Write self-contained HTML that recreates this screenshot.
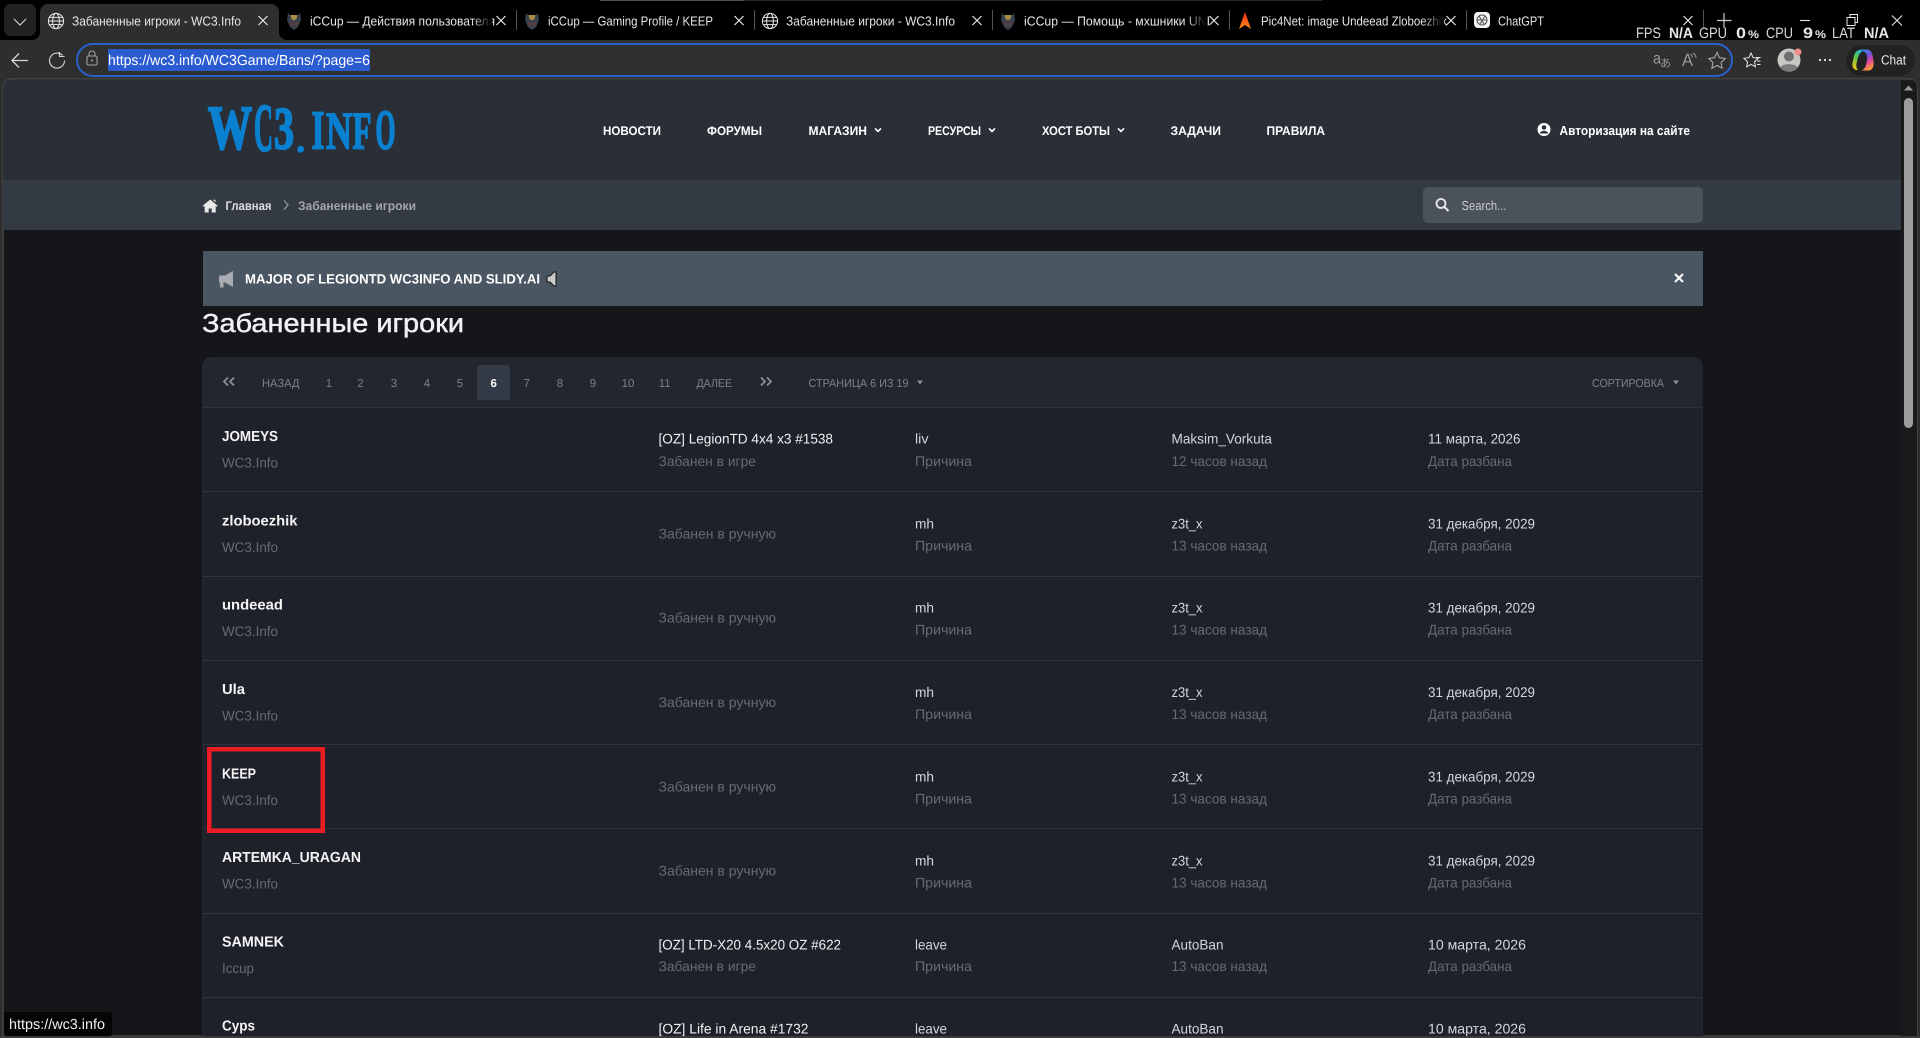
<!DOCTYPE html>
<html lang="ru"><head><meta charset="utf-8"><title>Забаненные игроки - WC3.Info</title>
<style>
html,body{margin:0;padding:0;background:#000;overflow:hidden;width:1920px;height:1038px}
svg{display:block;font-family:"Liberation Sans","Noto Sans CJK JP",sans-serif;text-rendering:geometricPrecision}
.t{font-size:13px;fill:#e6e6e6}
.o{font-size:15px;fill:#d8d8d8}
.ob{font-size:15px;fill:#e8e8e8;font-weight:700}
.nv{font-size:12.5px;font-weight:700;fill:#fff}
.bc{font-size:12.5px;font-weight:700}
.pg{font-size:11.5px;fill:#7c818a}
.n{font-size:14.5px;font-weight:700;fill:#f4f4f4}
.s{font-size:14px;fill:#666a72}
.v{font-size:14px;fill:#d3d6da}
.x{stroke:#e8e8e8;stroke-width:1.2;fill:none}
.lg{font-family:"Liberation Serif",serif;font-weight:700;fill:#0a80d0;stroke:#0a80d0;stroke-width:1.7}
</style></head><body>
<svg width="1920" height="1038" viewBox="0 0 1920 1038" xmlns="http://www.w3.org/2000/svg">
<defs>
<linearGradient id="fade"><stop offset="0" stop-color="#000" stop-opacity="0"/><stop offset="1" stop-color="#000"/></linearGradient>
<linearGradient id="cp1" x1="0" y1="0" x2="0.4" y2="1"><stop offset="0" stop-color="#2a8fe8"/><stop offset=".45" stop-color="#7a4fd8"/><stop offset=".75" stop-color="#e84a9a"/><stop offset="1" stop-color="#f5923a"/></linearGradient>
<linearGradient id="cp2" x1="0.7" y1="0" x2="0.2" y2="1"><stop offset="0" stop-color="#23b5d8"/><stop offset=".45" stop-color="#5cc84a"/><stop offset="1" stop-color="#f5c518"/></linearGradient>
<linearGradient id="fl" x1="0" y1="0" x2="0" y2="1"><stop offset="0" stop-color="#f52a1c"/><stop offset="1" stop-color="#fb8a12"/></linearGradient>
<g id="mask"><path d="M-6-8 L-3-5 L3-5 L6-8 L7-1 L4 6 L0 9 L-4 6 L-7-1Z" fill="#39414d"/><path d="M-3.500-6 L3.500-6 L2.500-2 L0-.5 L-2.500-2Z" fill="#a88f44"/><path d="M-4 1 L-1 2 L-1 5 L-3 4Z M4 1 L1 2 L1 5 L3 4Z" fill="#6e3b3b"/></g>
<g id="globe" fill="none" stroke="#e6e6e6" stroke-width="1"><circle r="7.6"/><ellipse rx="3.4" ry="7.6"/><path d="M-7.6 0H7.6M-6.8-3.6H6.8M-6.8 3.6H6.8"/></g>
<g id="cl"><path class="x" d="M-4.5-4.5 4.5 4.5M4.5-4.5-4.5 4.5"/></g>
<g id="ch"><path d="M-3-1.6 0 1.4 3-1.6" fill="none" stroke="#fff" stroke-width="1.6"/></g>
<path id="tri" d="M-3-2H3L0 2Z" fill="#8b9098"/>
<clipPath id="cc"><path d="M3 1036V87a8 8 0 0 1 8-8H1909a8 8 0 0 1 8 8V1036Z"/></clipPath>
</defs>

<!-- browser chrome -->
<rect width="1920" height="40" fill="#000"/>
<rect x="600" y="0" width="722" height="1" fill="#2a2a2a"/>
<rect x="600" y="0" width="144" height="1" fill="#555"/>
<rect y="40" width="1920" height="998" fill="#2e2e2e"/>
<rect x="4" y="4" width="32" height="32" rx="7" fill="#222"/>
<path d="M14 19l6 6 6-6" fill="none" stroke="#cfcfcf" stroke-width="1.2"/>
<path d="M32 40a8 8 0 0 0 8-8V12a8 8 0 0 1 8-8H271a8 8 0 0 1 8 8V32a8 8 0 0 0 8 8Z" fill="#2e2e2e"/>

<use href="#globe" x="56" y="21"/>
<text class="t" x="72" y="25.5" textLength="169" lengthAdjust="spacingAndGlyphs">Забаненные игроки - WC3.Info</text>
<use href="#cl" x="263" y="20.5"/>

<use href="#mask" x="294" y="21"/>
<text class="t" x="310" y="25.5" textLength="185" lengthAdjust="spacingAndGlyphs">iCCup — Действия пользователя</text>
<rect x="472" y="8" width="20" height="26" fill="url(#fade)"/>
<use href="#cl" x="501" y="20.5"/>
<rect x="516" y="10" width="1" height="20" fill="#555"/>

<use href="#mask" x="532" y="21"/>
<text class="t" x="548" y="25.5" textLength="165" lengthAdjust="spacingAndGlyphs">iCCup — Gaming Profile / KEEP</text>
<use href="#cl" x="739" y="20.5"/>
<rect x="754" y="10" width="1" height="20" fill="#555"/>

<use href="#globe" x="770" y="21"/>
<text class="t" x="786" y="25.5" textLength="169" lengthAdjust="spacingAndGlyphs">Забаненные игроки - WC3.Info</text>
<use href="#cl" x="977" y="20.5"/>
<rect x="992" y="10" width="1" height="20" fill="#555"/>

<use href="#mask" x="1008" y="21"/>
<text class="t" x="1024" y="25.5" textLength="186" lengthAdjust="spacingAndGlyphs">iCCup — Помощь - мхшники UNI</text>
<rect x="1186" y="8" width="20" height="26" fill="url(#fade)"/>
<use href="#cl" x="1214" y="20.5"/>
<rect x="1229" y="10" width="1" height="20" fill="#555"/>

<path d="M1245 12 L1251 29 L1245 25 L1239 29Z" fill="url(#fl)"/>
<text class="t" x="1261" y="25.5" textLength="186" lengthAdjust="spacingAndGlyphs">Pic4Net: image Undeead Zloboezhik</text>
<rect x="1422" y="8" width="22" height="26" fill="url(#fade)"/>
<use href="#cl" x="1451" y="20.5"/>
<rect x="1466" y="10" width="1" height="20" fill="#555"/>

<rect x="1474" y="12" width="16" height="16" rx="4" fill="#f2f2f2"/>
<g fill="none" stroke="#555" stroke-width="1.1"><circle cx="1482" cy="20" r="5"/><path d="M1479 16l5 8M1485 16l-5 8M1477 20h10"/></g>
<text class="t" x="1498" y="25.5" textLength="46" lengthAdjust="spacingAndGlyphs">ChatGPT</text>
<use href="#cl" x="1688" y="20.5"/>
<rect x="1703" y="10" width="1" height="18" fill="#555"/>
<path d="M1724 13v15M1717 20.5h14.500" stroke="#cfcfcf" stroke-width="1.2" fill="none"/>
<path d="M1800 20.500h10" stroke="#e8e8e8" stroke-width="1.1"/>
<path d="M1847 17.500h8v8h-8zM1850 17v-2.500h7.500v8h-2.500" fill="none" stroke="#e8e8e8" stroke-width="1"/>
<path d="M1892 15.500l10 10M1902 15.500l-10 10" stroke="#e8e8e8" stroke-width="1.1"/>

<!-- overlay stats -->
<text class="o" x="1636" y="38" textLength="25" lengthAdjust="spacingAndGlyphs">FPS</text>
<text class="ob" x="1669" y="38" textLength="24" lengthAdjust="spacingAndGlyphs">N/A</text>
<text class="o" x="1699" y="38" textLength="28" lengthAdjust="spacingAndGlyphs">GPU</text>
<text class="ob" x="1736" y="38" textLength="10" lengthAdjust="spacingAndGlyphs">0</text>
<text class="ob" x="1748" y="38" style="font-size:11px" textLength="11" lengthAdjust="spacingAndGlyphs">%</text>
<text class="o" x="1766" y="38" textLength="27" lengthAdjust="spacingAndGlyphs">CPU</text>
<text class="ob" x="1803" y="38" textLength="10" lengthAdjust="spacingAndGlyphs">9</text>
<text class="ob" x="1815" y="38" style="font-size:11px" textLength="11" lengthAdjust="spacingAndGlyphs">%</text>
<text class="o" x="1832" y="38" textLength="23" lengthAdjust="spacingAndGlyphs">LAT</text>
<text class="ob" x="1864" y="38" textLength="25" lengthAdjust="spacingAndGlyphs">N/A</text>

<!-- toolbar -->
<path d="M28 60.500H12M19 53.500l-7 7 7 7" fill="none" stroke="#d8d8d8" stroke-width="1.3"/>
<path d="M62.500 55.500a7.500 7.500 0 1 0 2 5" fill="none" stroke="#d8d8d8" stroke-width="1.1"/><path d="M59.500 52v4.500h5" fill="none" stroke="#d8d8d8" stroke-width="1.1"/>
<rect x="77" y="44" width="1655" height="32" rx="16" fill="#303030" stroke="#2b5fcc" stroke-width="2"/>
<rect x="87" y="56" width="10" height="9" rx="1.500" fill="none" stroke="#a5a5a5"/><path d="M89 56v-2a3 3 0 0 1 6 0v2" fill="none" stroke="#a5a5a5"/><circle cx="92" cy="60.500" r="1" fill="#a5a5a5"/>
<rect x="108" y="49" width="262" height="22" fill="#2a5bd0"/>
<text x="108" y="65" style="font-size:14.500px;fill:#fff" textLength="262" lengthAdjust="spacingAndGlyphs">https://wc3.info/WC3Game/Bans/?page=6</text>
<text x="1653" y="63.500" style="font-size:16px;fill:#9a9a9a" textLength="8" lengthAdjust="spacingAndGlyphs">a</text><text x="1660" y="67" style="font-size:11px;fill:#9a9a9a;font-family:'Noto Sans CJK JP',sans-serif">あ</text>
<text x="1682" y="66" style="font-size:18px;fill:#9a9a9a" textLength="11" lengthAdjust="spacingAndGlyphs">A</text><path d="M1693 53c2 1 3 3 3 5M1690.500 54c1 1 2 2 2 3.500" fill="none" stroke="#9a9a9a"/>
<path d="M1717 52.500l2.500 5.200 5.700.8-4.100 4 1 5.700-5.100-2.700-5.100 2.700 1-5.700-4.100-4 5.700-.8Z" fill="none" stroke="#a8a8a8" stroke-width="1.100"/>
<path d="M1751 53l2.100 4.600 5 .7-3.600 3.500.9 5-4.400-2.400-4.400 2.400.9-5-3.600-3.500 5-.7Z" fill="none" stroke="#e8e8e8" stroke-width="1"/>
<path d="M1756 57.500h4.500M1757 61h3.500M1757 64.500h3.500" stroke="#e8e8e8" stroke-width="1"/>
<circle cx="1789" cy="60" r="11.500" fill="#c9c7c4"/><circle cx="1789" cy="56.500" r="5" fill="#6f6f6f"/><path d="M1780 67.500a10 6 0 0 1 18 0a11.500 11.500 0 0 1-18 0Z" fill="#7d7d7d"/>
<circle cx="1798" cy="52" r="3.500" fill="#f28b8b"/>
<circle cx="1820" cy="60" r="1.100" fill="#e8e8e8"/><circle cx="1825" cy="60" r="1.100" fill="#e8e8e8"/><circle cx="1830" cy="60" r="1.100" fill="#e8e8e8"/>
<rect x="1846" y="45" width="69" height="31" rx="15.500" fill="#222"/>
<path d="M1860 50c-3 0-5 2-6 6l-1.500 7c-.8 4 1.500 7 4.500 7h1c-1.500-1.500-2-4-1.500-6.500l1.500-6c1-3 3-6.500 7-7.500Z" fill="url(#cp2)"/>
<path d="M1860 49.500h7c3 0 4.500 2 5.500 5.500l1 6c.7 4-.5 9.500-5 9.500h-8c3 0 5-3 5.500-6l1-4.500c.5-3 0-6-2-7.500-1.500-1-3.500-2-5-3Z" fill="url(#cp1)"/>
<text x="1881" y="64.500" style="font-size:13.500px;fill:#e6e6e6" textLength="25" lengthAdjust="spacingAndGlyphs">Chat</text>

<!-- page -->
<path d="M3 1036V87a8 8 0 0 1 8-8H1909a8 8 0 0 1 8 8V1036Z" fill="#14161a" stroke="#555" stroke-width="1"/>
<g clip-path="url(#cc)">
<rect x="3" y="80" width="1898" height="100" fill="#2a2e37"/>
<rect x="3" y="180" width="1898" height="50" fill="#343a44"/>
<rect x="1901" y="80" width="16" height="960" fill="#1a1a1a"/>
<path d="M1908.500 85.500l4.500 5h-9Z" fill="#9a9a9a"/>
<rect x="1904" y="98" width="9" height="330" rx="4.500" fill="#9d9d9d"/>

<!-- logo -->
<text class="lg" x="208" y="148.500" style="font-size:62px;stroke-width:2.400" textLength="44" lengthAdjust="spacingAndGlyphs">W</text>
<text class="lg" x="254" y="150.500" style="font-size:68px;stroke-width:2" textLength="19" lengthAdjust="spacingAndGlyphs">C</text>
<text class="lg" x="274" y="148.500" style="font-size:60px;stroke-width:2" textLength="20" lengthAdjust="spacingAndGlyphs">3</text>
<circle cx="300.700" cy="149.300" r="3.400" fill="#0a80d0"/>
<text class="lg" x="311.500" y="148.500" style="font-size:55px" textLength="13" lengthAdjust="spacingAndGlyphs">I</text>
<text class="lg" x="326" y="148.500" style="font-size:53px" textLength="26" lengthAdjust="spacingAndGlyphs">N</text>
<text class="lg" x="352.500" y="148.500" style="font-size:53px" textLength="19" lengthAdjust="spacingAndGlyphs">F</text>
<text class="lg" x="375.500" y="148.500" style="font-size:56px;stroke-width:2" textLength="20" lengthAdjust="spacingAndGlyphs">O</text>

<!-- nav -->
<text class="nv" x="603" y="135" textLength="58" lengthAdjust="spacingAndGlyphs">НОВОСТИ</text>
<text class="nv" x="707" y="135" textLength="55" lengthAdjust="spacingAndGlyphs">ФОРУМЫ</text>
<text class="nv" x="808.500" y="135" textLength="58.500" lengthAdjust="spacingAndGlyphs">МАГАЗИН</text><use href="#ch" x="878" y="130"/>
<text class="nv" x="928" y="135" textLength="53" lengthAdjust="spacingAndGlyphs">РЕСУРСЫ</text><use href="#ch" x="992" y="130"/>
<text class="nv" x="1042" y="135" textLength="68" lengthAdjust="spacingAndGlyphs">ХОСТ БОТЫ</text><use href="#ch" x="1121" y="130"/>
<text class="nv" x="1170.500" y="135" textLength="50.500" lengthAdjust="spacingAndGlyphs">ЗАДАЧИ</text>
<text class="nv" x="1266.500" y="135" textLength="58.500" lengthAdjust="spacingAndGlyphs">ПРАВИЛА</text>
<circle cx="1544" cy="129.500" r="6.500" fill="#fff"/><circle cx="1544" cy="127.500" r="2.300" fill="#2a2e37"/><path d="M1540 133.500a4 2.800 0 0 1 8 0Z" fill="#2a2e37"/>
<text class="nv" x="1559.500" y="135" style="font-size:13px" textLength="130.500" lengthAdjust="spacingAndGlyphs">Авторизация на сайте</text>

<!-- breadcrumb -->
<path d="M210.200 199.500l7.500 6.300-1 1.100-1-.8v6.400h-4v-4h-3v4h-4v-6.400l-1 .8-1-1.100Zm3.300.3h2v2.500l-2-1.700Z" fill="#e8e8e8"/>
<text class="bc" x="225.500" y="210" style="fill:#d9dbde" textLength="46" lengthAdjust="spacingAndGlyphs">Главная</text>
<path d="M284 200.500l4 4.500-4 4.500" fill="none" stroke="#9a9fa6" stroke-width="1.200"/>
<text class="bc" x="298" y="210" style="fill:#a0a4aa" textLength="118" lengthAdjust="spacingAndGlyphs">Забаненные игроки</text>
<rect x="1423" y="187" width="280" height="36" rx="5" fill="#4b525c"/>
<circle cx="1441" cy="203.500" r="4.500" fill="none" stroke="#e8e8e8" stroke-width="1.800"/><path d="M1444.500 207l4 4" stroke="#e8e8e8" stroke-width="2"/>
<text x="1461.500" y="210" style="font-size:13px;fill:#c6c9cd" textLength="45" lengthAdjust="spacingAndGlyphs">Search...</text>

<!-- banner -->
<rect x="203" y="251" width="1500" height="55" fill="#4b5663"/>
<path d="M219 275.500h6l8-4.500v16l-8-4.500h-1.500v5h-3.500v-5h-1Z" fill="#a8acb2"/>
<text x="245" y="283.500" style="font-size:13.500px;font-weight:700;fill:#fff" textLength="295" lengthAdjust="spacingAndGlyphs">MAJOR OF LEGIONTD WC3INFO AND SLIDY.AI</text>
<path d="M547 276h3l4-4h2v14h-2l-4-4h-3Z" fill="#c9c9c9" stroke="#111" stroke-width="1"/>
<path d="M1675 274l8 8M1683 274l-8 8" stroke="#fff" stroke-width="2"/>

<text x="202" y="332" style="font-size:26px;font-weight:400;fill:#f0f1f3;stroke:#f0f1f3;stroke-width:.45" textLength="262" lengthAdjust="spacingAndGlyphs">Забаненные игроки</text>

<!-- panel -->
<path d="M203 1040V366a8 8 0 0 1 8-8H1694a8 8 0 0 1 8 8V1040Z" fill="#1f212a" stroke="#2a2d35"/>
<path d="M203.500 407V366a8 8 0 0 1 8-8H1694a8 8 0 0 1 8 8V407Z" fill="#23262e"/>
<rect x="477" y="365" width="33" height="35" rx="3" fill="#333a47"/>
<path d="M228 377.500l-4 4 4 4M234 377.500l-4 4 4 4" fill="none" stroke="#8b9098" stroke-width="1.800"/>
<text class="pg" x="262" y="387" textLength="37.500" lengthAdjust="spacingAndGlyphs">НАЗАД</text>
<g text-anchor="middle">
<text class="pg" x="329" y="387">1</text>
<text class="pg" x="360.500" y="387">2</text>
<text class="pg" x="394" y="387">3</text>
<text class="pg" x="427" y="387">4</text>
<text class="pg" x="460" y="387">5</text>
<text x="493.700" y="387" style="font-size:11.500px;font-weight:700;fill:#fff">6</text>
<text class="pg" x="526.700" y="387">7</text>
<text class="pg" x="560" y="387">8</text>
<text class="pg" x="593" y="387">9</text>
<text class="pg" x="628" y="387">10</text>
<text class="pg" x="664.700" y="387">11</text>
</g>
<text class="pg" x="696.500" y="387" textLength="35.500" lengthAdjust="spacingAndGlyphs">ДАЛЕЕ</text>
<path d="M761 377.500l4 4-4 4M767 377.500l4 4-4 4" fill="none" stroke="#8b9098" stroke-width="1.800"/>
<text class="pg" x="808.500" y="387" textLength="100" lengthAdjust="spacingAndGlyphs">СТРАНИЦА 6 ИЗ 19</text><use href="#tri" x="920" y="382.500"/>
<text class="pg" x="1592" y="387" textLength="72" lengthAdjust="spacingAndGlyphs">СОРТИРОВКА</text><use href="#tri" x="1676" y="382.500"/>

<!-- row separators -->
<path d="M203 407.500H1702M203 491.500H1702M203 576.500H1702M203 660.500H1702M203 744.500H1702M203 828.500H1702M203 913.500H1702M203 997.500H1702" stroke="#30333b" stroke-width="1"/>

<!-- rows -->
<g transform="translate(0,406.600)">
<text class="n" x="222" y="34.500" textLength="56" lengthAdjust="spacingAndGlyphs">JOMEYS</text>
<text class="s" x="222" y="61" textLength="56" lengthAdjust="spacingAndGlyphs">WC3.Info</text>
<text class="v" x="658.500" y="37" style="fill:#f0f0f0" textLength="174.500" lengthAdjust="spacingAndGlyphs">[OZ] LegionTD 4x4 x3 #1538</text>
<text class="s" x="658.500" y="59.500" textLength="97.500" lengthAdjust="spacingAndGlyphs">Забанен в игре</text>
<text class="v" x="915" y="37" textLength="13.500" lengthAdjust="spacingAndGlyphs">liv</text>
<text class="s" x="915" y="59.500" textLength="57" lengthAdjust="spacingAndGlyphs">Причина</text>
<text class="v" x="1171.500" y="37" textLength="100.500" lengthAdjust="spacingAndGlyphs">Maksim_Vorkuta</text>
<text class="s" x="1171.500" y="59.500" textLength="95.500" lengthAdjust="spacingAndGlyphs">12 часов назад</text>
<text class="v" x="1428" y="37" textLength="92.500" lengthAdjust="spacingAndGlyphs">11 марта, 2026</text>
<text class="s" x="1428" y="59.500" textLength="84" lengthAdjust="spacingAndGlyphs">Дата разбана</text>
</g>

<g transform="translate(0,490.900)">
<text class="n" x="222" y="34.500" textLength="75.500" lengthAdjust="spacingAndGlyphs">zloboezhik</text>
<text class="s" x="222" y="61" textLength="56" lengthAdjust="spacingAndGlyphs">WC3.Info</text>
<text class="s" x="658.500" y="47.500" textLength="117.500" lengthAdjust="spacingAndGlyphs">Забанен в ручную</text>
<text class="v" x="915" y="37.500" textLength="19" lengthAdjust="spacingAndGlyphs">mh</text>
<text class="s" x="915" y="59.500" textLength="57" lengthAdjust="spacingAndGlyphs">Причина</text>
<text class="v" x="1171.500" y="37.500" textLength="31" lengthAdjust="spacingAndGlyphs">z3t_x</text>
<text class="s" x="1171.500" y="59.500" textLength="95.500" lengthAdjust="spacingAndGlyphs">13 часов назад</text>
<text class="v" x="1428" y="37.500" textLength="107" lengthAdjust="spacingAndGlyphs">31 декабря, 2029</text>
<text class="s" x="1428" y="59.500" textLength="84" lengthAdjust="spacingAndGlyphs">Дата разбана</text>
</g>

<g transform="translate(0,575.200)">
<text class="n" x="222" y="34.500" textLength="61" lengthAdjust="spacingAndGlyphs">undeead</text>
<text class="s" x="222" y="61" textLength="56" lengthAdjust="spacingAndGlyphs">WC3.Info</text>
<text class="s" x="658.500" y="47.500" textLength="117.500" lengthAdjust="spacingAndGlyphs">Забанен в ручную</text>
<text class="v" x="915" y="37.500" textLength="19" lengthAdjust="spacingAndGlyphs">mh</text>
<text class="s" x="915" y="59.500" textLength="57" lengthAdjust="spacingAndGlyphs">Причина</text>
<text class="v" x="1171.500" y="37.500" textLength="31" lengthAdjust="spacingAndGlyphs">z3t_x</text>
<text class="s" x="1171.500" y="59.500" textLength="95.500" lengthAdjust="spacingAndGlyphs">13 часов назад</text>
<text class="v" x="1428" y="37.500" textLength="107" lengthAdjust="spacingAndGlyphs">31 декабря, 2029</text>
<text class="s" x="1428" y="59.500" textLength="84" lengthAdjust="spacingAndGlyphs">Дата разбана</text>
</g>

<g transform="translate(0,659.500)">
<text class="n" x="222" y="34.500" textLength="23" lengthAdjust="spacingAndGlyphs">Ula</text>
<text class="s" x="222" y="61" textLength="56" lengthAdjust="spacingAndGlyphs">WC3.Info</text>
<text class="s" x="658.500" y="47.500" textLength="117.500" lengthAdjust="spacingAndGlyphs">Забанен в ручную</text>
<text class="v" x="915" y="37.500" textLength="19" lengthAdjust="spacingAndGlyphs">mh</text>
<text class="s" x="915" y="59.500" textLength="57" lengthAdjust="spacingAndGlyphs">Причина</text>
<text class="v" x="1171.500" y="37.500" textLength="31" lengthAdjust="spacingAndGlyphs">z3t_x</text>
<text class="s" x="1171.500" y="59.500" textLength="95.500" lengthAdjust="spacingAndGlyphs">13 часов назад</text>
<text class="v" x="1428" y="37.500" textLength="107" lengthAdjust="spacingAndGlyphs">31 декабря, 2029</text>
<text class="s" x="1428" y="59.500" textLength="84" lengthAdjust="spacingAndGlyphs">Дата разбана</text>
</g>

<g transform="translate(0,743.800)">
<text class="n" x="222" y="34.500" textLength="34" lengthAdjust="spacingAndGlyphs">KEEP</text>
<text class="s" x="222" y="61" textLength="56" lengthAdjust="spacingAndGlyphs">WC3.Info</text>
<text class="s" x="658.500" y="47.500" textLength="117.500" lengthAdjust="spacingAndGlyphs">Забанен в ручную</text>
<text class="v" x="915" y="37.500" textLength="19" lengthAdjust="spacingAndGlyphs">mh</text>
<text class="s" x="915" y="59.500" textLength="57" lengthAdjust="spacingAndGlyphs">Причина</text>
<text class="v" x="1171.500" y="37.500" textLength="31" lengthAdjust="spacingAndGlyphs">z3t_x</text>
<text class="s" x="1171.500" y="59.500" textLength="95.500" lengthAdjust="spacingAndGlyphs">13 часов назад</text>
<text class="v" x="1428" y="37.500" textLength="107" lengthAdjust="spacingAndGlyphs">31 декабря, 2029</text>
<text class="s" x="1428" y="59.500" textLength="84" lengthAdjust="spacingAndGlyphs">Дата разбана</text>
</g>

<g transform="translate(0,828.100)">
<text class="n" x="222" y="34" textLength="139" lengthAdjust="spacingAndGlyphs">ARTEMKA_URAGAN</text>
<text class="s" x="222" y="60.500" textLength="56" lengthAdjust="spacingAndGlyphs">WC3.Info</text>
<text class="s" x="658.500" y="47.500" textLength="117.500" lengthAdjust="spacingAndGlyphs">Забанен в ручную</text>
<text class="v" x="915" y="37.500" textLength="19" lengthAdjust="spacingAndGlyphs">mh</text>
<text class="s" x="915" y="59.500" textLength="57" lengthAdjust="spacingAndGlyphs">Причина</text>
<text class="v" x="1171.500" y="37.500" textLength="31" lengthAdjust="spacingAndGlyphs">z3t_x</text>
<text class="s" x="1171.500" y="59.500" textLength="95.500" lengthAdjust="spacingAndGlyphs">13 часов назад</text>
<text class="v" x="1428" y="37.500" textLength="107" lengthAdjust="spacingAndGlyphs">31 декабря, 2029</text>
<text class="s" x="1428" y="59.500" textLength="84" lengthAdjust="spacingAndGlyphs">Дата разбана</text>
</g>

<g transform="translate(0,912.400)">
<text class="n" x="222" y="34" textLength="62" lengthAdjust="spacingAndGlyphs">SAMNEK</text>
<text class="s" x="222" y="60.500" textLength="32" lengthAdjust="spacingAndGlyphs">Iccup</text>
<text class="v" x="658.500" y="37" style="fill:#f0f0f0" textLength="182.500" lengthAdjust="spacingAndGlyphs">[OZ] LTD-X20 4.5x20 OZ #622</text>
<text class="s" x="658.500" y="58.500" textLength="97.500" lengthAdjust="spacingAndGlyphs">Забанен в игре</text>
<text class="v" x="915" y="37" textLength="32" lengthAdjust="spacingAndGlyphs">leave</text>
<text class="s" x="915" y="58.500" textLength="57" lengthAdjust="spacingAndGlyphs">Причина</text>
<text class="v" x="1171.500" y="37" textLength="52" lengthAdjust="spacingAndGlyphs">AutoBan</text>
<text class="s" x="1171.500" y="58.500" textLength="95.500" lengthAdjust="spacingAndGlyphs">13 часов назад</text>
<text class="v" x="1428" y="37" textLength="98" lengthAdjust="spacingAndGlyphs">10 марта, 2026</text>
<text class="s" x="1428" y="58.500" textLength="84" lengthAdjust="spacingAndGlyphs">Дата разбана</text>
</g>

<g transform="translate(0,996.700)">
<text class="n" x="222" y="34" textLength="33" lengthAdjust="spacingAndGlyphs">Cyps</text>
<text class="v" x="658.500" y="37" style="fill:#f0f0f0" textLength="150" lengthAdjust="spacingAndGlyphs">[OZ] Life in Arena #1732</text>
<text class="v" x="915" y="37" textLength="32" lengthAdjust="spacingAndGlyphs">leave</text>
<text class="v" x="1171.500" y="37" textLength="52" lengthAdjust="spacingAndGlyphs">AutoBan</text>
<text class="v" x="1428" y="37" textLength="98" lengthAdjust="spacingAndGlyphs">10 марта, 2026</text>
</g>
</g>

<!-- red annotation -->
<rect x="209.250" y="749.250" width="113.500" height="81.500" fill="none" stroke="#ed1c24" stroke-width="4.500"/>

<!-- status tooltip -->
<rect x="4" y="1012" width="108" height="24" rx="2" fill="#050505"/>
<text x="9" y="1029" style="font-size:14.500px;fill:#f0f0f0" textLength="96" lengthAdjust="spacingAndGlyphs">https://wc3.info</text>
<rect y="1036" width="1920" height="2" fill="#3a3a3a"/>
</svg>
</body></html>
